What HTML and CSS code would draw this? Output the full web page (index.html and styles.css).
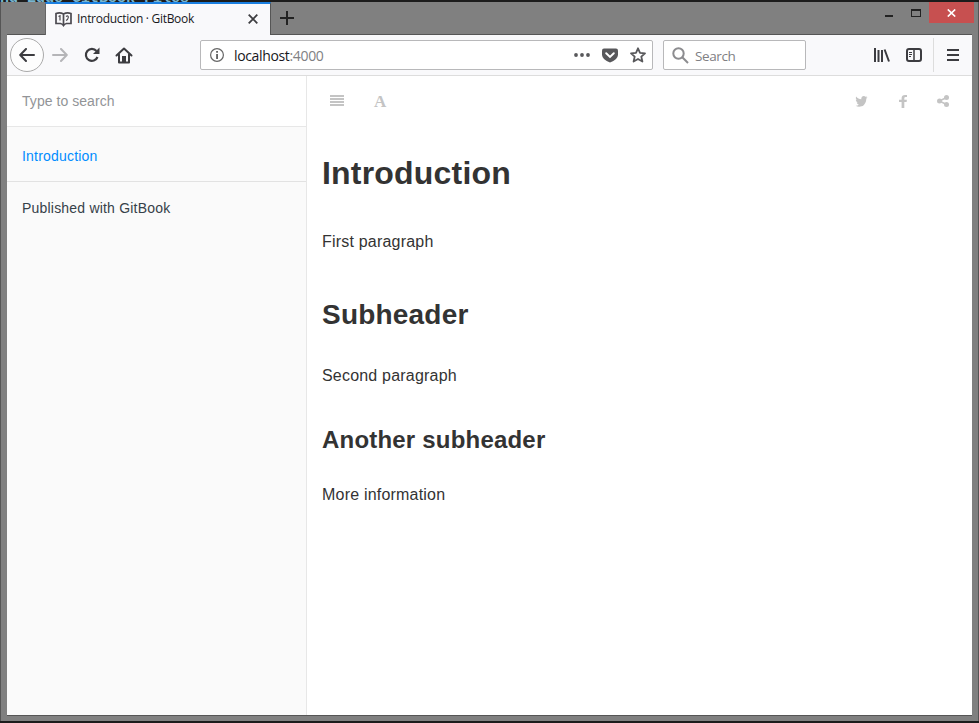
FILE: index.html
```html
<!DOCTYPE html>
<html lang="en">
<head>
<meta charset="utf-8">
<title>Introduction · GitBook</title>
<link rel="stylesheet" href="styles.css">
</head>
<body>
<div class="backdrop"><span>nd Edge GitBook Files</span></div>
<div class="window">
  <header class="titlebar">
    <div class="tab">
      <svg class="favicon" width="17" height="16" viewBox="0 0 17 16" fill="none" stroke="#4c4a50" stroke-width="1.7"><path d="M1 2.500Q5 1 8.500 3Q12 1 16 2.500V12.500H11.500Q9.500 13 8.500 14.500Q7.500 13 5.500 12.500H1ZM8.500 3V14"/><path stroke-width="1.200" d="M3.500 5.500L5 4.800V9.500M11 5.500Q13.500 4 13.300 6.500Q13 8.500 11 9.500"/></svg>
      <span class="tab-title">Introduction · GitBook</span>
      <svg class="tab-close" width="10" height="10" viewBox="0 0 10 10" stroke="#3d3d40" stroke-width="1.8"><path d="M.7.700l8.600 8.600M9.300.700L.7 9.300"/></svg>
    </div>
    <svg class="new-tab" width="14" height="14" viewBox="0 0 14 14" stroke="#222" stroke-width="2"><path d="M7 0v14M0 7h14"/></svg>
    <div class="controls">
      <svg class="minimize" width="8" height="2"><path fill="#222" d="M0 0h8v2H0z"/></svg>
      <svg class="maximize" width="10" height="8"><path fill="#222" fill-rule="evenodd" d="M0 0h10v8H0zM1 2v5h8V2z"/></svg>
      <div class="close"><svg width="9" height="8" viewBox="0 0 9 8" stroke="#fff" stroke-width="1.700"><path d="M.8.500l7.400 7M8.200.500l-7.400 7"/></svg></div>
    </div>
  </header>
  <nav class="toolbar">
    <div class="back"><svg width="16" height="14" viewBox="0 0 16 14" fill="none" stroke="#3c3c40" stroke-width="2" stroke-linecap="round" stroke-linejoin="round"><path d="M15 7H1.500M7 1L1.200 7L7 13"/></svg></div>
    <svg class="forward" width="16" height="14" viewBox="0 0 16 14" fill="none" stroke="#b5b5b8" stroke-width="2" stroke-linecap="round" stroke-linejoin="round"><path d="M1 7h13.500M9 1l5.800 6L9 13"/></svg>
    <svg class="reload" width="16" height="16" viewBox="0 0 16 16" fill="none" stroke="#3c3c40" stroke-width="2.200"><path d="M13.500 10A6 6 0 1 1 12.500 4"/><path fill="#3c3c40" stroke="none" d="M15.500 .5V7H9Z"/></svg>
    <svg class="home" width="18" height="17" viewBox="0 0 18 17" fill="none" stroke="#3c3c40" stroke-width="2" stroke-linecap="round" stroke-linejoin="round"><path d="M1.500 8.500L9 1.500L16.500 8.500M4 7.500V15.500H14V7.500"/><path fill="#3c3c40" stroke="none" d="M7 9h4v7H7z"/></svg>
    <div class="address">
      <svg class="info" width="14" height="14" viewBox="0 0 14 14"><circle cx="7" cy="7" r="6.400" fill="none" stroke="#666" stroke-width="1.200"/><path fill="#555" d="M6.200 3h1.700v1.700H6.200zM6.200 6h1.700v5H6.200z"/></svg>
      <span class="host">localhost<span class="port">:4000</span></span>
      <svg class="dots" width="16" height="4" fill="#58585b"><circle cx="2" cy="2" r="1.900"/><circle cx="8" cy="2" r="1.900"/><circle cx="14" cy="2" r="1.900"/></svg>
      <svg class="pocket" width="16" height="15" viewBox="0 0 16 15"><path fill="#58585b" d="M2 .5H14Q16 .5 16 2.500V7Q15.500 12 8 14.500Q.5 12 0 7V2.500Q0 .5 2 .5Z"/><path d="M4.200 5.300L8 8.900L11.800 5.300" fill="none" stroke="#fff" stroke-width="2" stroke-linecap="round"/></svg>
      <svg class="star" width="16" height="16" viewBox="0 0 16 16"><path d="M8 1.300L10 5.800L15 6.300L11.300 9.600L12.400 14.500L8 12L3.600 14.500L4.700 9.600L1 6.300L6 5.800Z" fill="none" stroke="#58585b" stroke-width="1.800" stroke-linejoin="round"/></svg>
    </div>
    <div class="searchbox">
      <svg width="17" height="17" viewBox="0 0 17 17" fill="none" stroke="#8c8c8f" stroke-width="2"><circle cx="6.500" cy="6.500" r="5.200"/><path d="M10.300 10.300L16 16"/></svg>
      <span>Search</span>
    </div>
    <div class="tools">
      <svg width="16" height="14" viewBox="0 0 16 14" stroke="#3c3c40" stroke-width="2"><path d="M1 0v14M4.500 2v12M8 2v12M10.600 1.500L15 13.500"/></svg>
      <svg class="panel" width="16" height="14" viewBox="0 0 16 14" fill="none" stroke="#3c3c40" stroke-width="2"><rect x="1" y="1" width="14" height="12" rx="2"/><path stroke-width="1.500" d="M8 1v12"/><path stroke-width="1" d="M3 4.500h3M3 6.500h3M3 8.500h2"/></svg>
      <div class="menu"><svg width="12" height="12" fill="#3c3c40"><path d="M0 0h12v2H0zM0 5h12v2H0zM0 10h12v2H0z"/></svg></div>
    </div>
  </nav>
  <div class="page">
    <aside class="sidebar">
      <div class="book-search">Type to search</div>
      <a class="chapter">Introduction</a>
      <a class="published">Published with GitBook</a>
    </aside>
    <main class="book">
      <div class="book-header">
        <svg class="align" width="14" height="11" fill="#c4c4c4"><path d="M0 0h14v2H0zM0 3h14v2H0zM0 6h14v2H0zM0 9h14v2H0z"/></svg>
        <span class="font-size">A</span>
        <div class="share">
          <svg width="13" height="11" viewBox="0 0 1684 1300" preserveAspectRatio="none" fill="#c4c4c4"><path d="M1620 152q-67 98-162 167 1 14 1 42 0 130-38 259.500T1305.500 869 1121 1079.500t-258 146-323 54.500q-271 0-496-145 35 4 78 4 225 0 401-138-105-2-188-64.500T221 777q33 5 61 5 43 0 85-11-112-23-185.500-111.500T108 454v-4q68 38 146 41-66-44-105-115t-39-154q0-88 44-163 121 149 294.500 238.500T820 397q-8-38-8-74 0-134 94.500-228.500T1135 0q140 0 236 102 109-21 205-78-37 115-142 178 93-10 186-50z"/></svg>
          <svg class="facebook" width="8" height="13" viewBox="0 0 8 13" fill="#c4c4c4"><path d="M8 0v2.100H6.700Q5.300 2.100 5.300 3.300V4.800H7.900L7.600 7.100H5.300V13H2.600V7.100H0V4.800H2.600V3Q2.700 0 6 0Z"/></svg>
          <svg class="share-icon" width="12" height="12" viewBox="0 0 12 12" fill="#c4c4c4"><path d="M2.500 6L9.500 2.500M2.500 6L9.500 9.500" stroke="#c4c4c4" stroke-width="1.500"/><circle cx="2.500" cy="6" r="2.500"/><circle cx="9.500" cy="2.500" r="2.500"/><circle cx="9.500" cy="9.500" r="2.500"/></svg>
        </div>
      </div>
      <article>
        <h1>Introduction</h1>
        <p>First paragraph</p>
        <h2>Subheader</h2>
        <p>Second paragraph</p>
        <h3>Another subheader</h3>
        <p>More information</p>
      </article>
    </main>
  </div>
</div>
</body>
</html>
```
FILE: styles.css
```css
* { box-sizing: border-box; }
body { margin: 0; width: 979px; height: 723px; overflow: hidden; background: #1c1c1c; font-family: "Liberation Sans", Arial, sans-serif; }
svg { display: block; flex: none; }
.backdrop { height: 2px; overflow: hidden; display: flex; align-items: flex-end; color: #77b5d0; font: bold 15px/6px "Liberation Mono", monospace; white-space: pre; }
.window { height: 719px; padding: 0 6px 5px; background: #808080; border-left: 1px solid #555; border-right: 1px solid #555; }
.titlebar { height: 32px; display: flex; margin-right: -2px; }
.tab { width: 226px; margin-left: 38px; border-top: 2px solid #1b7fe0; border-left: 1px solid #666; border-right: 1px solid #555; background: #f9f9fb; display: flex; align-items: center; padding: 0 12px 2px 9px; height: 33px; }
.tab-title { font: 12px "Open Sans", sans-serif; color: #18181c; margin-left: 5px; letter-spacing: -.29px; }
.tab-close { margin-left: auto; }
.new-tab { margin: 9px 0 0 9px; }
.controls { margin-left: auto; display: flex; align-items: flex-start; }
.minimize { margin: 13px 18px 0 0; }
.maximize { margin: 7px 8px 0 0; }
.close { width: 45px; height: 21px; background: #c75050; display: flex; align-items: center; justify-content: center; }
.toolbar { height: 42px; background: #f9f9fb; border-top: 1px solid #555; border-bottom: 1px solid #ddd; display: flex; align-items: center; padding-left: 3px; }
.back { width: 34px; height: 34px; border: 1px solid #aaa; border-radius: 50%; background: #fdfdfd; display: flex; align-items: center; justify-content: center; }
.forward { margin-left: 8px; }
.reload { margin-left: 16px; }
.home { margin-left: 15px; }
.address { margin-left: 67px; width: 453px; height: 30px; background: #fff; border: 1px solid #b8b8ba; border-radius: 2px; display: flex; align-items: center; padding: 0 6px 0 9px; font: 14px "Open Sans", sans-serif; color: #18181c; }
.host { margin-left: 10px; padding-top: 1px; letter-spacing: -.35px; }
.port { color: #808083; }
.dots { margin-left: auto; }
.pocket { margin-left: 12px; }
.star { margin-left: 12px; }
.searchbox { width: 143px; height: 30px; margin-left: 10px; background: #fff; border: 1px solid #b8b8ba; border-radius: 2px; display: flex; align-items: center; padding-left: 8px; font: 13.5px "Open Sans", sans-serif; letter-spacing: -.4px; color: #808083; }
.searchbox span { margin-left: 6px; padding-top: 1px; }
.tools { margin-left: auto; display: flex; align-items: center; }
.panel { margin-left: 16px; }
.menu { width: 39px; height: 34px; margin-left: 11px; border-left: 1px solid #ddd; display: flex; align-items: center; justify-content: center; }
.page { height: 640px; display: flex; background: #fff; border-bottom: 1px solid #555; }
.sidebar { width: 300px; background: #fafafa; border-right: 1px solid #e7e7e7; font-size: 14px; letter-spacing: .2px; }
.book-search { height: 51px; line-height: 50px; padding-left: 15px; background: #fff; border-bottom: 1px solid #e7e7e7; color: #929497; letter-spacing: .05px; }
.chapter { display: block; height: 55px; line-height: 59px; padding-left: 15px; border-bottom: 1px solid #e2e2e2; color: #008cff; }
.published { display: block; line-height: 53px; padding-left: 15px; color: #364149; }
.book { flex: 1; }
.book-header { height: 50px; display: flex; align-items: center; padding: 0 23px 0 23px; color: #c4c4c4; }
.align { margin-top: -1px; }
.font-size { font: bold 17px "Liberation Serif", serif; margin-left: 30px; padding-top: 1px; }
.share { margin-left: auto; display: flex; align-items: center; }
.facebook { margin-left: 31px; }
.share-icon { margin-left: 30px; }
article { padding: 24px 15px 0; color: #333; font-size: 16px; letter-spacing: .2px; }
h1, h2, h3, p { margin: 0; }
h1 { font-size: 32px; line-height: 46px; }
h2 { font-size: 28px; line-height: 40px; margin-top: 39px; }
h3 { font-size: 24px; line-height: 34px; margin-top: 33px; }
p { line-height: 28px; }
h1 + p { margin-top: 32px; }
h2 + p { margin-top: 27px; }
h3 + p { margin-top: 24px; }
```
